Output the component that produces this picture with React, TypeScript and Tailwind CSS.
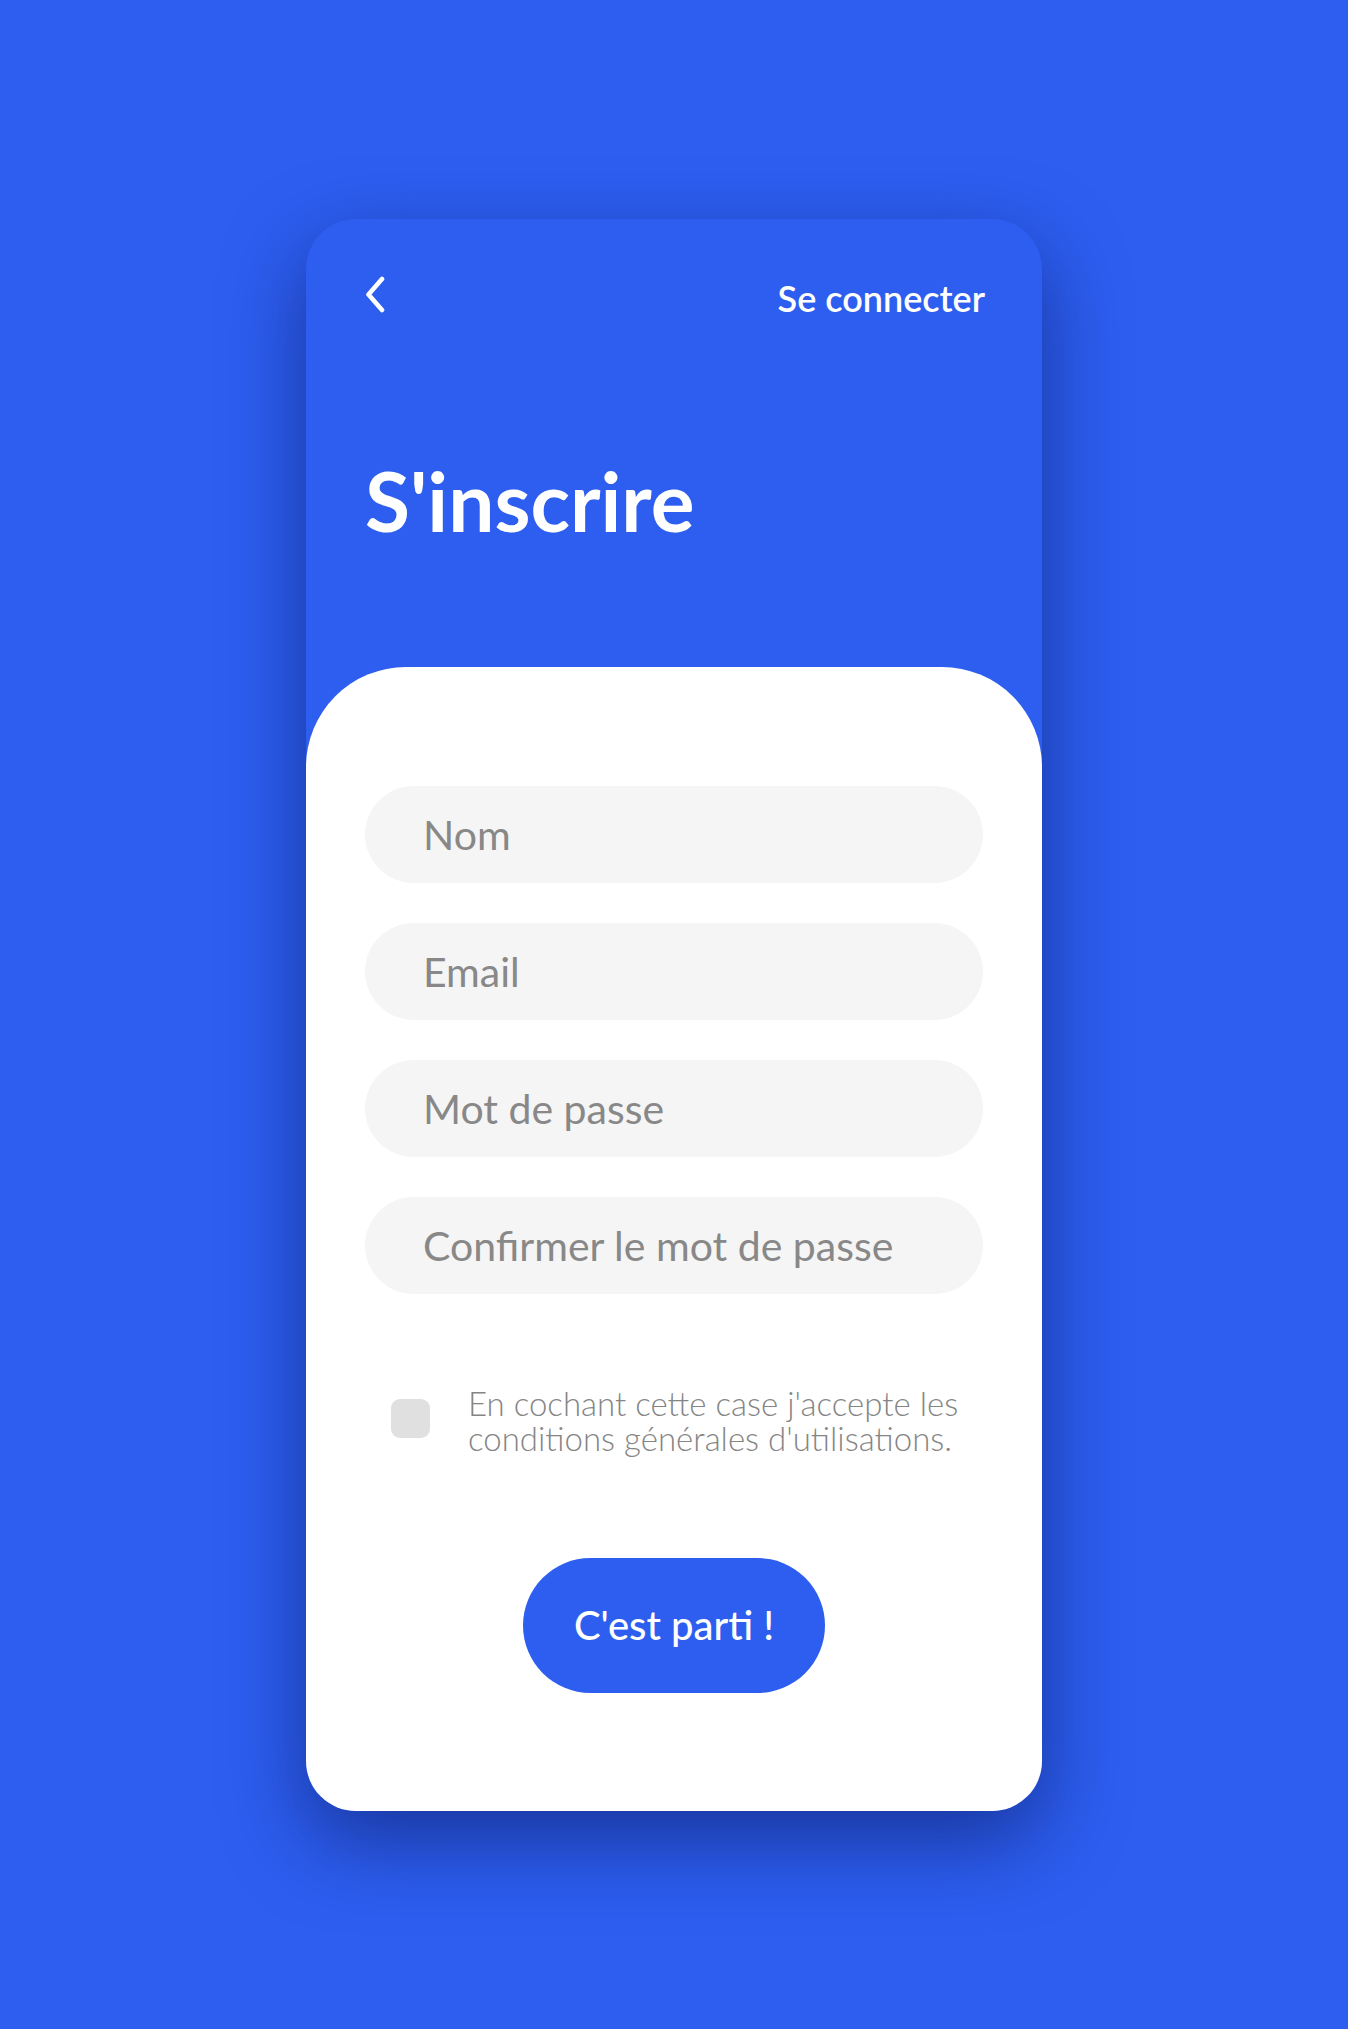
import { useState } from "react";

const fields = ["Nom", "Email", "Mot de passe", "Confirmer le mot de passe"];

function BackChevron() {
  return (
    <svg width="22" height="37" viewBox="0 0 22 37" fill="none" aria-hidden>
      <path
        d="M18 3 L4.5 18.5 L18 34"
        stroke="white"
        strokeWidth="4.6"
        strokeLinecap="round"
        strokeLinejoin="round"
      />
    </svg>
  );
}

export default function App() {
  const [accepted, setAccepted] = useState(false);

  return (
    <div
      className="min-h-screen w-full bg-[#2d5eef] flex items-center justify-center"
      style={{ fontFamily: "Lato, 'Open Sans', sans-serif" }}
    >
      <div className="w-[736px] h-[1592px] rounded-[50px] overflow-hidden bg-[#2d5eef] flex flex-col shadow-[0_30px_80px_rgba(8,20,90,0.55)]">
        {/* header */}
        <div className="h-[448px] shrink-0 px-[59px] pt-[57px]">
          <div className="flex items-start justify-between">
            <button type="button" aria-label="Retour" className="block -ml-[1px]">
              <BackChevron />
            </button>
            <a href="#" className="mt-[4px] -mr-[2px] text-[36px] leading-none font-semibold text-white">
              Se connecter
            </a>
          </div>
          <h1 className="mt-[143px] text-[82px] leading-none font-bold text-white">
            S'inscrire
          </h1>
        </div>

        {/* form */}
        <div className="flex-1 bg-white rounded-t-[100px] px-[59px] pt-[119px]">
          <div className="flex flex-col gap-[40px]">
            {fields.map((f) => (
              <input
                key={f}
                type={f.includes("passe") ? "password" : f === "Email" ? "email" : "text"}
                placeholder={f}
                className="h-[97px] w-full rounded-full bg-[#f5f5f5] pl-[58px] pr-6 text-[41px] text-[#555] placeholder:text-[#888888] outline-none"
              />
            ))}
          </div>

          <label className="mt-[92px] flex items-start gap-[38px] pl-[26px] cursor-pointer">
            <input
              type="checkbox"
              checked={accepted}
              onChange={(e) => setAccepted(e.target.checked)}
              className="sr-only"
            />
            <span
              className={
                "mt-[13px] h-[39px] w-[39px] shrink-0 rounded-[9px] " +
                (accepted ? "bg-[#2d5eef]" : "bg-[#e0e0e0]")
              }
            />
            <span className="text-[33px] leading-[35px] font-light text-[#858585] whitespace-nowrap">
              En cochant cette case j'accepte les
              <br />
              conditions générales d'utilisations.
            </span>
          </label>

          <button
            type="button"
            className="mx-auto mt-[102px] flex h-[135px] w-[302px] items-center justify-center rounded-full bg-[#2d5eef] text-[40px] font-medium text-white"
          >
            C'est parti !
          </button>
        </div>
      </div>
    </div>
  );
}
